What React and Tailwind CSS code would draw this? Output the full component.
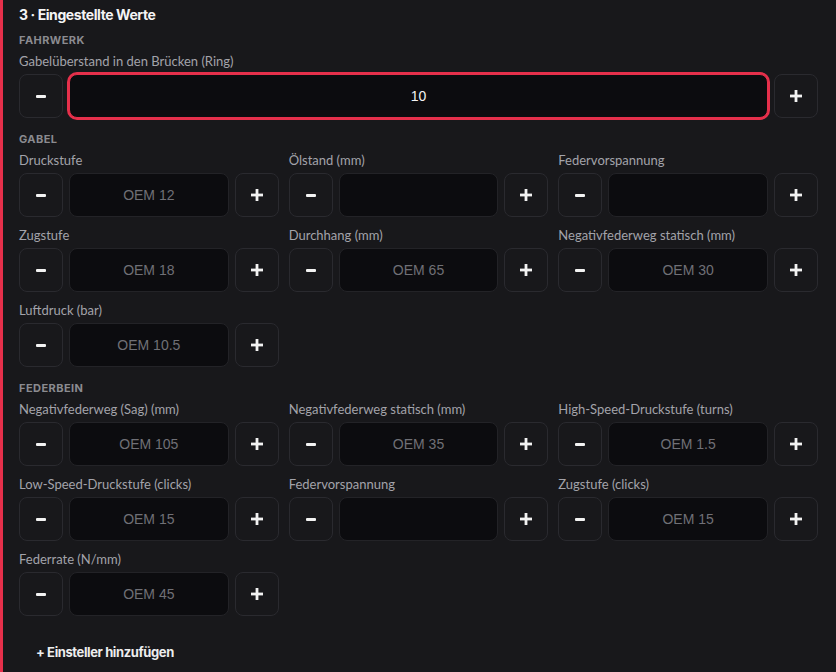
const gabel = [
  { label: "Druckstufe", placeholder: "OEM 12" },
  { label: "Ölstand (mm)", placeholder: "" },
  { label: "Federvorspannung", placeholder: "" },
  { label: "Zugstufe", placeholder: "OEM 18" },
  { label: "Durchhang (mm)", placeholder: "OEM 65" },
  { label: "Negativfederweg statisch (mm)", placeholder: "OEM 30" },
  { label: "Luftdruck (bar)", placeholder: "OEM 10.5" },
];

const federbein = [
  { label: "Negativfederweg (Sag) (mm)", placeholder: "OEM 105" },
  { label: "Negativfederweg statisch (mm)", placeholder: "OEM 35" },
  { label: "High-Speed-Druckstufe (turns)", placeholder: "OEM 1.5" },
  { label: "Low-Speed-Druckstufe (clicks)", placeholder: "OEM 15" },
  { label: "Federvorspannung", placeholder: "" },
  { label: "Zugstufe (clicks)", placeholder: "OEM 15" },
  { label: "Federrate (N/mm)", placeholder: "OEM 45" },
];

function StepButton({ sign }) {
  return (
    <button className="w-[44px] h-[44px] shrink-0 rounded-lg border border-[#2a2a2f] bg-[#18181b] flex items-center justify-center">
      {sign === "-" ? (
        <span className="block w-[10px] h-[3px] bg-[#f2f2f2] rounded-[1px]" />
      ) : (
        <svg width="12" height="12" viewBox="0 0 12 12">
          <rect x="4.6" y="0" width="2.8" height="12" fill="#f2f2f2" />
          <rect x="0" y="4.6" width="12" height="2.8" fill="#f2f2f2" />
        </svg>
      )}
    </button>
  );
}

function Field({ label, placeholder, value, focused }) {
  return (
    <div className="flex flex-col">
      <div className="text-[13px] leading-[17px] text-[#a3a3aa] mb-1 whitespace-nowrap font-['Lato',sans-serif]">{label}</div>
      <div className="flex items-center gap-[6px]">
        <StepButton sign="-" />
        <input
          readOnly
          defaultValue={value}
          placeholder={placeholder}
          className={
            "h-[44px] min-w-0 flex-1 rounded-lg bg-[#0c0c0f] text-center text-[14px] text-[#f4f4f5] placeholder:text-[#707076] outline-none font-['Liberation_Sans',Arial,sans-serif] " +
            (focused ? "border border-[#e6304b] ring-2 ring-[#e6304b]" : "border border-[#232327]")
          }
        />
        <StepButton sign="+" />
      </div>
    </div>
  );
}

function SectionLabel({ children }) {
  return (
    <div className="text-[11px] leading-[14px] font-bold uppercase tracking-[0.04em] text-[#8b8b90] mb-[6px]">
      {children}
    </div>
  );
}

function Grid({ items }) {
  return (
    <div className="grid grid-cols-3 gap-x-[10px] gap-y-[10px]">
      {items.map((f, i) => (
        <Field key={i} {...f} />
      ))}
    </div>
  );
}

export default function App() {
  return (
    <div className="w-[836px] h-[672px] overflow-hidden bg-[#18181b] border-l-[3px] border-[#e6304b] font-['Inter','Noto_Sans',sans-serif]">
      <div className="pl-[16px] pr-[18px] pt-[6px]">
        <h2 className="text-[14px] leading-[17px] font-bold tracking-[-0.03em] text-[#f4f4f5]">3 · Eingestellte Werte</h2>

        <div className="mt-[10px]">
          <SectionLabel>Fahrwerk</SectionLabel>
          <Field label="Gabelüberstand in den Brücken (Ring)" value="10" focused />
        </div>

        <div className="mt-[14px]">
          <SectionLabel>Gabel</SectionLabel>
          <Grid items={gabel} />
        </div>

        <div className="mt-[14px]">
          <SectionLabel>Federbein</SectionLabel>
          <Grid items={federbein} />
        </div>

        <button className="mt-[28px] px-[17px] text-[13px] leading-[17px] font-bold tracking-[-0.03em] text-[#ededee]">
          + Einsteller hinzufügen
        </button>
      </div>
    </div>
  );
}
